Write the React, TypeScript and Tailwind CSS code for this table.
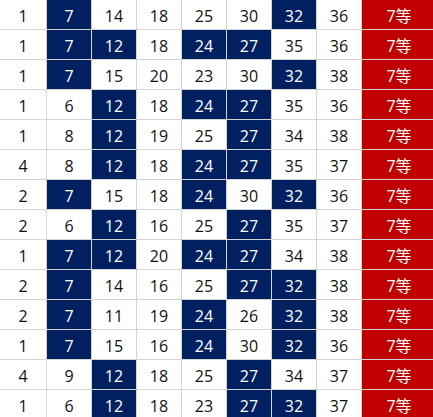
import React from "react";

const rows: number[][] = [
  [1, 7, 14, 18, 25, 30, 32, 36],
  [1, 7, 12, 18, 24, 27, 35, 36],
  [1, 7, 15, 20, 23, 30, 32, 38],
  [1, 6, 12, 18, 24, 27, 35, 36],
  [1, 8, 12, 19, 25, 27, 34, 38],
  [4, 8, 12, 18, 24, 27, 35, 37],
  [2, 7, 15, 18, 24, 30, 32, 36],
  [2, 6, 12, 16, 25, 27, 35, 37],
  [1, 7, 12, 20, 24, 27, 34, 38],
  [2, 7, 14, 16, 25, 27, 32, 38],
  [2, 7, 11, 19, 24, 26, 32, 38],
  [1, 7, 15, 16, 24, 30, 32, 36],
  [4, 9, 12, 18, 25, 27, 34, 37],
  [1, 6, 12, 18, 23, 27, 32, 37],
];

// numbers that matched the draw
const hits = new Set([7, 12, 24, 27, 32]);

const App = () => {
  return (
    <div className="w-[433px] h-[417px] overflow-hidden bg-white">
      <div
        className="grid grid-cols-[46px_repeat(7,44px)_71px] auto-rows-[29px] gap-px bg-[#d4d4d4] text-[16px]"
        style={{ fontFamily: '"Open Sans", "Noto Sans CJK JP", sans-serif' }}
      >
        {rows.map((row, r) => (
          <React.Fragment key={r}>
            {row.map((n, c) => {
              const hit = c > 0 && hits.has(n);
              return (
                <div
                  key={c}
                  className={`flex items-center justify-center pt-[2px] ${
                    hit ? "bg-[#002060] text-white" : "bg-white text-[#111]"
                  }`}
                >
                  {n}
                </div>
              );
            })}
            <div className="flex items-center justify-center pt-[2px] pl-[3px] bg-[#c00000] text-white">
              7等
            </div>
          </React.Fragment>
        ))}
      </div>
    </div>
  );
};

export default App;
